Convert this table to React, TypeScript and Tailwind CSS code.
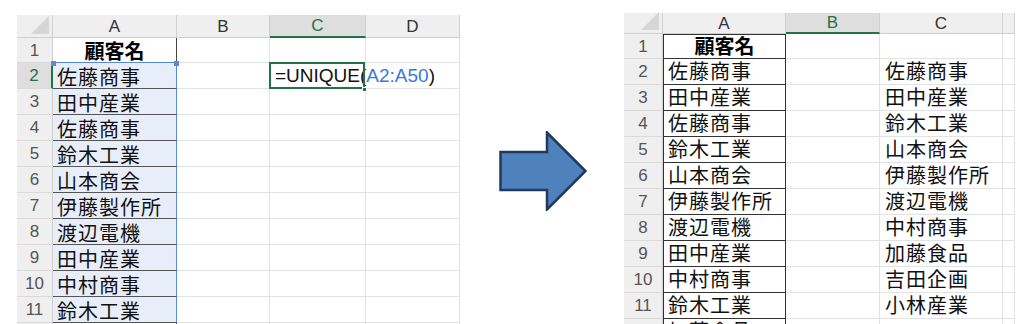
const names = [
  "佐藤商事",
  "田中産業",
  "佐藤商事",
  "鈴木工業",
  "山本商会",
  "伊藤製作所",
  "渡辺電機",
  "田中産業",
  "中村商事",
  "鈴木工業",
  "加藤食品",
];

const unique = [
  "佐藤商事",
  "田中産業",
  "鈴木工業",
  "山本商会",
  "伊藤製作所",
  "渡辺電機",
  "中村商事",
  "加藤食品",
  "吉田企画",
  "小林産業",
  "",
];

const font = "font-['Liberation_Sans','Noto_Sans_CJK_JP',sans-serif]";

function Corner() {
  return (
    <div className="relative border-r border-b border-[#d0d0d0] bg-[#efefef]">
      <svg className="absolute right-[3px] bottom-[3px]" width="18" height="18" viewBox="0 0 18 18">
        <polygon points="18,0 18,18 0,18" fill="#d6d6d6" />
      </svg>
    </div>
  );
}

function ColHead({ label, active }: { label: string; active?: boolean }) {
  return (
    <div
      className={`flex items-center justify-center border-r border-[#d0d0d0] text-[17px] leading-none ${
        active
          ? "border-b-2 border-b-[#217346] bg-[#dedede] text-[#217346]"
          : "border-b border-b-[#d0d0d0] bg-[#efefef] text-[#333]"
      }`}
    >
      {label}
    </div>
  );
}

function RowHead({ n, active }: { n: number; active?: boolean }) {
  return (
    <div
      className={`flex items-center justify-center border-b border-[#dadada] text-[17px] leading-none ${
        active
          ? "border-r-2 border-r-[#217346] bg-[#dedede] text-[#217346]"
          : "border-r border-r-[#d0d0d0] bg-[#efefef] text-[#555]"
      }`}
    >
      {n}
    </div>
  );
}

function LeftSheet() {
  return (
    <div
      className={`relative mt-[15px] grid w-[443px] grid-cols-[36px_124px_93px_96px_94px] grid-rows-[23px_25px_repeat(11,26px)] ${font}`}
    >
      <Corner />
      <ColHead label="A" />
      <ColHead label="B" />
      <ColHead label="C" active />
      <ColHead label="D" />

      <RowHead n={1} />
      <div className="flex items-end justify-center border-r border-b border-r-[#444] border-b-[#5b87d6] text-[20px] font-bold leading-none text-black">
        顧客名
      </div>
      <div className="border-r border-b border-[#e2e2e2]" />
      <div className="border-r border-b border-[#e2e2e2]" />
      <div className="border-r border-b border-[#e2e2e2]" />

      {names.map((name, i) => {
        const row = i + 2;
        const inSel = row <= 11;
        return (
          <div key={row} className="contents">
            <RowHead n={row} active={row === 2} />
            <div
              className={`flex items-end overflow-hidden whitespace-nowrap border-b pl-[4px] text-[20px] leading-none tracking-[1px] text-[#111] ${
                inSel
                  ? "border-r border-r-[#5b87d6] border-b-[#555] bg-[#e8eef9]"
                  : "border-r border-r-[#444] border-b-[#555]"
              }`}
            >
              {name}
            </div>
            <div className="border-r border-b border-[#e2e2e2]" />
            {row === 2 ? (
              <div className="relative z-10 flex items-center whitespace-nowrap border-b border-[#e2e2e2] pl-[5px] text-[19px] leading-none text-[#111]">
                <span>
                  =UNIQUE(<span className="text-[#3b78d8]">A2:A50</span>)
                </span>
                <div className="pointer-events-none absolute -top-px -left-px h-[27px] w-[96px] border-2 border-[#217346]" />
                <div className="absolute top-[24px] left-[92px] h-[5px] w-[5px] border border-white bg-[#217346]" />
              </div>
            ) : (
              <div className="border-r border-b border-[#e2e2e2]" />
            )}
            <div className="border-r border-b border-[#e2e2e2]" />
          </div>
        );
      })}

      <div className="absolute top-[46px] left-[34px] h-[5px] w-[5px] bg-[#5b87d6]" />
      <div className="absolute top-[46px] left-[157px] h-[5px] w-[5px] bg-[#5b87d6]" />
    </div>
  );
}

function RightSheet() {
  return (
    <div
      className={`mt-[13px] grid w-[391px] shrink-0 grid-cols-[39px_123px_94px_123px_12px] grid-rows-[21px_25px_repeat(11,26px)] ${font}`}
    >
      <Corner />
      <ColHead label="A" />
      <ColHead label="B" active />
      <ColHead label="C" />
      <ColHead label="" />

      <RowHead n={1} />
      <div className="flex items-center justify-center border border-[#333] text-[20px] font-bold leading-none text-black">
        顧客名
      </div>
      <div className="border-r border-b border-[#e2e2e2]" />
      <div className="border-r border-b border-[#e2e2e2]" />
      <div className="border-r border-b border-[#e2e2e2]" />

      {names.map((name, i) => {
        const row = i + 2;
        return (
          <div key={row} className="contents">
            <RowHead n={row} />
            <div className="flex items-center overflow-hidden whitespace-nowrap border-x border-b border-[#333] pl-[4px] text-[20px] leading-none tracking-[1px] text-[#111]">
              {name}
            </div>
            <div className="border-r border-b border-[#e2e2e2]" />
            <div className="flex items-center overflow-hidden whitespace-nowrap border-r border-b border-[#e2e2e2] pl-[5px] text-[20px] leading-none tracking-[1px] text-[#111]">
              {unique[i]}
            </div>
            <div className="border-r border-b border-[#e2e2e2]" />
          </div>
        );
      })}
    </div>
  );
}

function Arrow() {
  return (
    <svg className="mt-[131px] ml-[39px] shrink-0" width="88" height="80" viewBox="0 0 88 80">
      <polygon
        points="1.5,21 48,21 48,1.5 86.5,40 48,78.5 48,59 1.5,59"
        fill="#4f81bd"
        stroke="#1f3a5c"
        strokeWidth="2.5"
        strokeLinejoin="miter"
      />
    </svg>
  );
}

export default function App() {
  return (
    <div className="flex h-[324px] w-[1024px] items-start overflow-hidden bg-white pl-[17px]">
      <LeftSheet />
      <Arrow />
      <div className="ml-[37px]">
        <RightSheet />
      </div>
    </div>
  );
}
